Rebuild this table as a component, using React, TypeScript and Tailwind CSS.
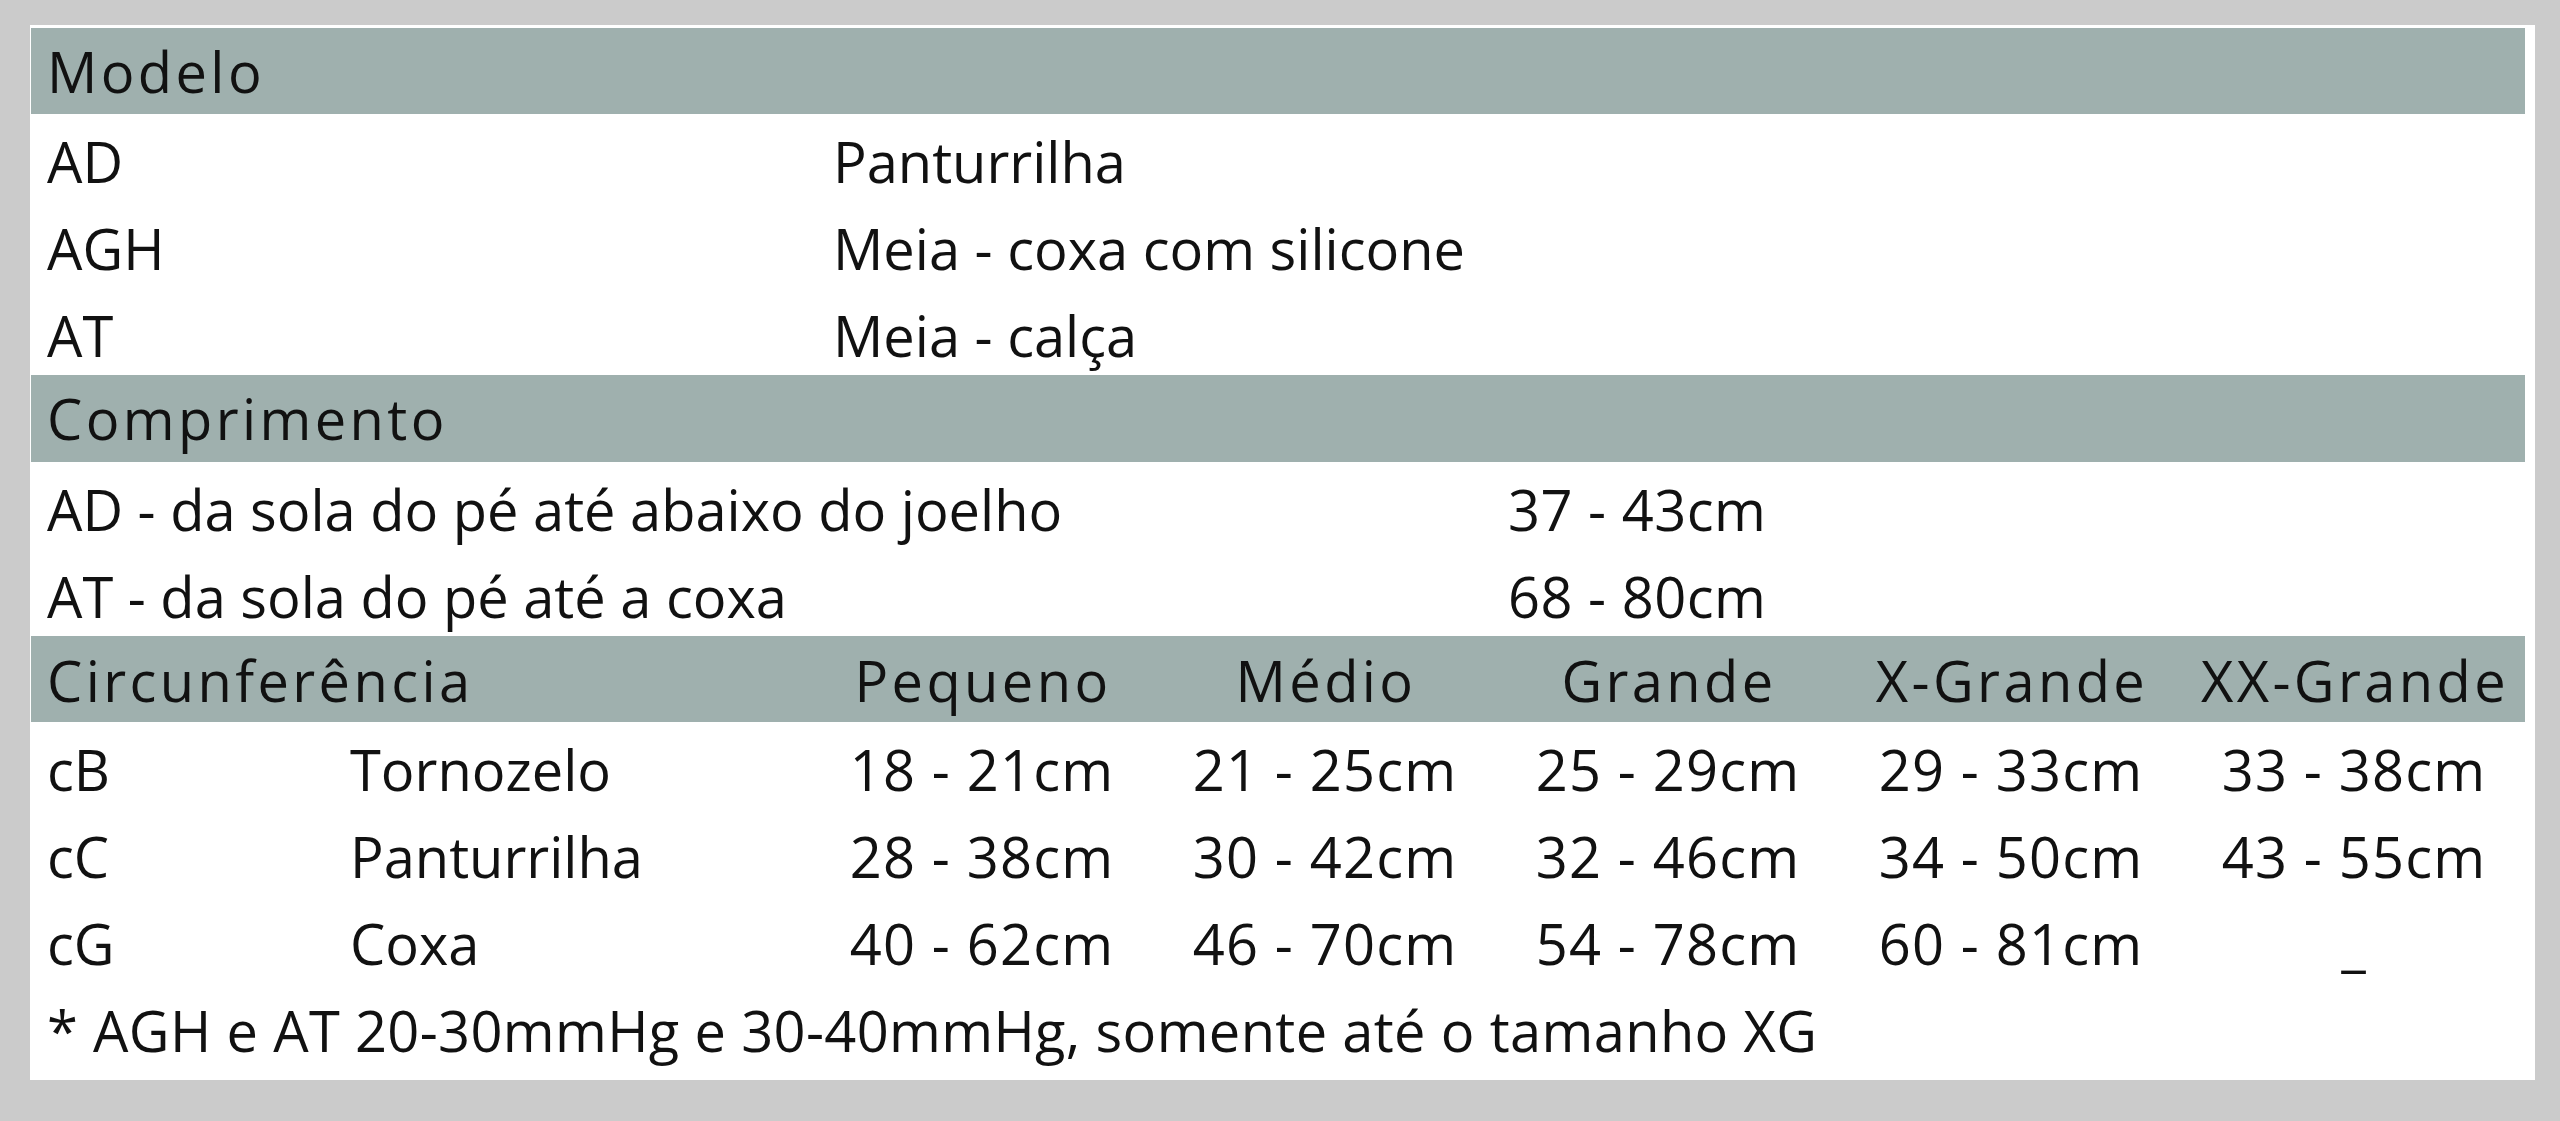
import React from 'react';

const MODELS = [
  { code: 'AD', name: 'Panturrilha' },
  { code: 'AGH', name: 'Meia - coxa com silicone' },
  { code: 'AT', name: 'Meia - calça' },
];

const LENGTHS = [
  { label: 'AD - da sola do pé até abaixo do joelho', value: '37 - 43cm' },
  { label: 'AT - da sola do pé até a coxa', value: '68 - 80cm' },
];

const SIZES = ['Pequeno', 'Médio', 'Grande', 'X-Grande', 'XX-Grande'];

const CIRCUMFERENCES = [
  { code: 'cB', part: 'Tornozelo', values: ['18 - 21cm', '21 - 25cm', '25 - 29cm', '29 - 33cm', '33 - 38cm'] },
  { code: 'cC', part: 'Panturrilha', values: ['28 - 38cm', '30 - 42cm', '32 - 46cm', '34 - 50cm', '43 - 55cm'] },
  { code: 'cG', part: 'Coxa', values: ['40 - 62cm', '46 - 70cm', '54 - 78cm', '60 - 81cm', '_'] },
];

function Band({ children }: { children: React.ReactNode }) {
  return (
    <div className="h-[87px] bg-[#9fb0ae] leading-[87px] tracking-[3.4px]">
      {children}
    </div>
  );
}

export default function App() {
  return (
    <div className="w-full h-[1121px] bg-[#cbcbcb] pt-[25px] pl-[30px] font-['Open_Sans',sans-serif] text-[56px] text-[#111]">
      <div className="w-[2505px] h-[1055px] bg-white pt-[3px] pl-[1px]">
        <div className="w-[2494px]">
          {/* Modelo */}
          <div className="h-[86px] bg-[#9fb0ae] leading-[86px] tracking-[3.4px] pl-[16px]">Modelo</div>
          {MODELS.map((m) => (
            <div key={m.code} className="h-[87px] grid grid-cols-[786px_1fr] pt-[7px] leading-[80px]">
              <span className="pl-[16px]">{m.code}</span>
              <span className="pl-[16px]">{m.name}</span>
            </div>
          ))}

          {/* Comprimento */}
          <Band>
            <div className="pl-[16px]">Comprimento</div>
          </Band>
          {LENGTHS.map((l) => (
            <div key={l.value} className="h-[87px] grid grid-cols-[1461px_1fr] pt-[7px] leading-[80px]">
              <span className="pl-[16px]">{l.label}</span>
              <span className="pl-[16px] tracking-[0.5px]">{l.value}</span>
            </div>
          ))}

          {/* Circunferência */}
          <div className="h-[86px] bg-[#9fb0ae] grid grid-cols-[779px_repeat(5,343px)] pt-[2px] leading-[84px] tracking-[3.4px]">
            <span className="pl-[16px]">Circunferência</span>
            {SIZES.map((s) => (
              <span key={s} className="text-center pl-[3px]">{s}</span>
            ))}
          </div>
          {CIRCUMFERENCES.map((c) => (
            <div key={c.code} className="h-[87px] grid grid-cols-[303px_476px_repeat(5,343px)] pt-[7px] leading-[80px]">
              <span className="pl-[16px]">{c.code}</span>
              <span className="pl-[16px]">{c.part}</span>
              {c.values.map((v, i) => (
                <span key={i} className="text-center tracking-[1.2px] pl-[1px]">{v}</span>
              ))}
            </div>
          ))}
          <div className="h-[87px] pt-[7px] leading-[80px] pl-[16px] tracking-[0.35px]">
            * AGH e AT 20-30mmHg e 30-40mmHg, somente até o tamanho XG
          </div>
        </div>
      </div>
    </div>
  );
}
